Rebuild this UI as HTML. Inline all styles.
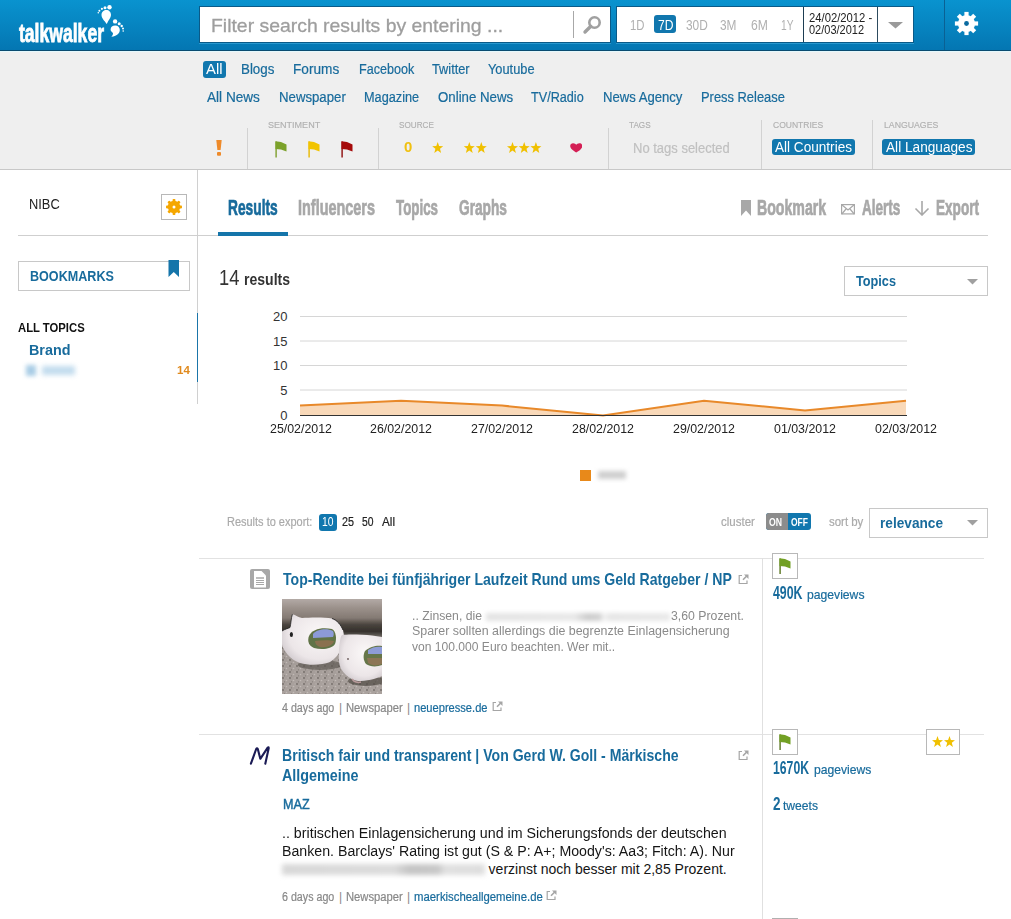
<!DOCTYPE html>
<html><head><meta charset="utf-8">
<style>
html,body{margin:0;padding:0;background:#fff;}
body{width:1011px;height:919px;position:relative;overflow:hidden;font-family:"Liberation Sans",sans-serif;}
.t{position:absolute;white-space:nowrap;line-height:1;transform-origin:0 0;}
.a{position:absolute;}
</style></head><body>
<!-- header -->
<div class="a" style="left:0;top:0;width:1011px;height:50px;background:linear-gradient(#0993cf,#0476b2);"></div>
<div class="a" style="left:0;top:50px;width:1011px;height:1px;background:#0a4b70;"></div>
<!-- filter bar -->
<div class="a" style="left:0;top:51px;width:1011px;height:118px;background:#efefef;"></div>
<div class="a" style="left:0;top:51px;width:1011px;height:1px;background:#e4f8fc;"></div>
<div class="a" style="left:0;top:169px;width:1011px;height:1px;background:#c8c8c8;"></div>
<!-- logo feet -->
<svg class="a" style="left:94px;top:2px" width="34" height="40" viewBox="0 0 34 40">
 <g fill="#fff">
  <path d="M7.5 13C7.5 9.5 10 8 12.3 8C15 8 17 10 17 13C17 16 14.5 18 13 21.5C12.8 21.9 12.3 21.9 12.2 21.5C11 19 7.5 16.5 7.5 13z"/>
  <circle cx="15.5" cy="5.2" r="2.2"/><circle cx="11" cy="5.8" r="1.5"/><circle cx="7.9" cy="6.8" r="1.1"/><circle cx="5.4" cy="8.7" r="1"/><circle cx="4.3" cy="10.8" r="0.8"/>
  <path d="M16.6 27.5C16.6 24.8 18.6 23.4 21.2 23.4C24 23.4 25.8 25.5 25.8 28C25.8 31.5 22.5 34 17.4 34.8C19 33 19.5 31.5 18.5 30.5C17.2 29.5 16.6 28.8 16.6 27.5z"/>
  <circle cx="21.1" cy="19.4" r="2.2"/><circle cx="25.2" cy="21.7" r="1.5"/><circle cx="27.7" cy="24" r="1.2"/><circle cx="29" cy="26.5" r="1"/><circle cx="29.2" cy="29" r="0.8"/>
 </g>
</svg>
<!-- search box -->
<div class="a" style="left:199px;top:6px;width:412px;height:37px;background:#0a5a88;"></div>
<div class="a" style="left:200px;top:7px;width:410px;height:35px;background:#fff;"></div>
<div class="a" style="left:199px;top:43px;width:412px;height:1px;background:#2898cf;"></div>
<div class="a" style="left:573px;top:11px;width:1px;height:27px;background:#a8a8a8;"></div>
<svg class="a" style="left:582px;top:15px" width="21" height="20" viewBox="0 0 21 20">
 <circle cx="12.5" cy="7.5" r="5.2" fill="none" stroke="#a0a0a0" stroke-width="2.6"/>
 <path d="M8.8 11.2L3 17" stroke="#a0a0a0" stroke-width="3.4" stroke-linecap="round"/>
</svg>
<!-- date box -->
<div class="a" style="left:616px;top:6px;width:298px;height:37px;background:#0a5a88;"></div>
<div class="a" style="left:617px;top:7px;width:296px;height:35px;background:#fff;"></div>
<div class="a" style="left:616px;top:43px;width:298px;height:1px;background:#2898cf;"></div>
<div class="a" style="left:654px;top:15px;width:22px;height:18px;background:#1177ae;border-radius:3px;"></div>
<div class="a" style="left:803px;top:7px;width:1px;height:35px;background:#1d3d52;"></div>
<div class="a" style="left:877px;top:7px;width:1px;height:35px;background:#2d4b5e;"></div>
<svg class="a" style="left:888px;top:22px" width="16" height="7"><path d="M0 0H15L7.5 6.5z" fill="#9a9a9a"/></svg>
<div class="a" style="left:944px;top:0;width:1px;height:50px;background:#0a6194;"></div>
<svg class="a" style="left:954px;top:11px" width="25" height="25" viewBox="-12.5 -12.5 25 25">
 <g fill="#fff">
  <circle r="8.6"/>
  <g id="tooth"><rect x="-2.1" y="-11.6" width="4.2" height="5" /></g>
  <use href="#tooth" transform="rotate(45)"/><use href="#tooth" transform="rotate(90)"/><use href="#tooth" transform="rotate(135)"/>
  <use href="#tooth" transform="rotate(180)"/><use href="#tooth" transform="rotate(225)"/><use href="#tooth" transform="rotate(270)"/><use href="#tooth" transform="rotate(315)"/>
 </g>
 <circle r="2.4" fill="#0a6aa0"/>
</svg>

<!-- filter bar badges -->
<div class="a" style="left:203px;top:61px;width:23px;height:17px;background:#1177ae;border-radius:3px;"></div>
<div class="a" style="left:772px;top:139px;width:83px;height:16px;background:#1177ae;border-radius:3px;"></div>
<div class="a" style="left:882px;top:139px;width:93px;height:16px;background:#1177ae;border-radius:3px;"></div>
<!-- separators -->
<div class="a" style="left:247px;top:128px;width:1px;height:41px;background:#d2d2d2;"></div>
<div class="a" style="left:378px;top:128px;width:1px;height:41px;background:#d2d2d2;"></div>
<div class="a" style="left:608px;top:128px;width:1px;height:41px;background:#d2d2d2;"></div>
<div class="a" style="left:761px;top:120px;width:1px;height:49px;background:#d2d2d2;"></div>
<div class="a" style="left:872px;top:120px;width:1px;height:49px;background:#d2d2d2;"></div>
<!-- exclamation -->
<svg class="a" style="left:215px;top:140px" width="8" height="16" viewBox="0 0 8 16">
 <path d="M1.3 0H6.7L5.6 10H2.4z" fill="#ee8a2a"/><rect x="2" y="12" width="4" height="3.8" rx="1" fill="#ee8a2a"/>
</svg>
<!-- flags -->
<svg class="a" style="left:274.5px;top:140.5px" width="14" height="17" viewBox="0 0 14 17">
 <rect x="0.4" y="0.5" width="1.4" height="16" fill="#7e9f2c"/><path d="M0.5 0.3L6 1L11.5 3.6V10.5L6 8.6L0.5 7.9z" fill="#7ba12a"/>
</svg>
<svg class="a" style="left:307.5px;top:140.5px" width="14" height="17" viewBox="0 0 14 17">
 <rect x="0.4" y="0.5" width="1.4" height="16" fill="#e8b800"/><path d="M0.5 0.3L6 1L11.5 3.6V10.5L6 8.6L0.5 7.9z" fill="#f2c400"/>
</svg>
<svg class="a" style="left:340.5px;top:140.5px" width="14" height="17" viewBox="0 0 14 17">
 <rect x="0.4" y="0.5" width="1.4" height="16" fill="#8e0c0c"/><path d="M0.5 0.3L6 1L11.5 3.6V10.5L6 8.6L0.5 7.9z" fill="#a50a0a"/>
</svg>
<!-- source stars -->
<svg class="a" style="left:430px;top:140px" width="115" height="14" viewBox="0 0 115 14">
 <defs><path id="st" d="M5.5 0L6.9 4.1L11 4.2L7.8 6.8L8.9 11L5.5 8.5L2.1 11L3.2 6.8L0 4.2L4.1 4.1z" fill="#f0c000"/></defs>
 <use href="#st" x="2.2" y="2"/>
 <use href="#st" x="33.8" y="2"/><use href="#st" x="45.8" y="2"/>
 <use href="#st" x="77" y="2"/><use href="#st" x="88.7" y="2"/><use href="#st" x="100.4" y="2"/>
</svg>
<svg class="a" style="left:569.5px;top:142.5px" width="12.5" height="10" viewBox="0 0 12.5 10">
 <path d="M6.25 9.6C4 8 0.2 6 0.2 3C0.2 1.2 1.5 0.2 3.1 0.2C4.6 0.2 5.7 1 6.25 1.8C6.8 1 7.9 0.2 9.4 0.2C11 0.2 12.3 1.2 12.3 3C12.3 6 8.5 8 6.25 9.6z" fill="#d41f55"/>
</svg>

<!-- sidebar -->
<div class="a" style="left:197px;top:170px;width:1px;height:234px;background:#d0d0d0;"></div>
<div class="a" style="left:197px;top:313px;width:1px;height:69px;background:#1a75a9;"></div>
<div class="a" style="left:18px;top:235px;width:970px;height:1px;background:#cfcfcf;"></div>
<div class="a" style="left:161px;top:194px;width:24px;height:24px;border:1px solid #b8b8b8;background:#fff;"></div>
<svg class="a" style="left:165px;top:198px" width="18" height="18" viewBox="-9 -9 18 18">
 <g fill="#f5a700">
  <circle r="6.2"/>
  <g id="t2"><rect x="-1.4" y="-8" width="2.8" height="3" rx="0.8"/></g>
  <use href="#t2" transform="rotate(45)"/><use href="#t2" transform="rotate(90)"/><use href="#t2" transform="rotate(135)"/>
  <use href="#t2" transform="rotate(180)"/><use href="#t2" transform="rotate(225)"/><use href="#t2" transform="rotate(270)"/><use href="#t2" transform="rotate(315)"/>
 </g>
 <circle r="1.5" fill="#fff"/>
</svg>
<div class="a" style="left:18px;top:261px;width:170px;height:28px;border:1px solid #c8c8c8;background:#fff;"></div>
<svg class="a" style="left:168px;top:260px" width="12" height="18" viewBox="0 0 12 18"><path d="M0.5 0H11V17L5.75 12L0.5 17z" fill="#1575aa"/></svg>
<div class="a" style="left:26px;top:365px;width:10px;height:11px;background:#a9cde6;filter:blur(2px);"></div><div class="a" style="left:42px;top:366px;width:33px;height:9px;background:#c2dcee;filter:blur(2.5px);"></div>

<!-- tabs -->
<div class="a" style="left:218px;top:232px;width:70px;height:4px;background:#1575aa;"></div>
<svg class="a" style="left:741px;top:200px" width="10" height="16" viewBox="0 0 10 16"><path d="M0 0H10V16L5 10.5L0 16z" fill="#a8a8a8"/></svg>
<svg class="a" style="left:841px;top:203.5px" width="14" height="11" viewBox="0 0 14 11"><rect x="0.6" y="0.6" width="12.8" height="9.3" fill="none" stroke="#a8a8a8" stroke-width="1.2"/><path d="M0.8 0.8L7 6L13.2 0.8M0.8 10L5 5M13.2 10L9 5" fill="none" stroke="#a8a8a8" stroke-width="1.2"/></svg>
<svg class="a" style="left:914px;top:201px" width="16" height="15" viewBox="0 0 16 15"><path d="M8 0V14M1.5 7.5L8 14L14.5 7.5" fill="none" stroke="#a8a8a8" stroke-width="1.6"/></svg>

<!-- topics dropdown -->
<div class="a" style="left:844px;top:266px;width:142px;height:28px;border:1px solid #c8c8c8;background:#fff;"></div>
<svg class="a" style="left:967px;top:279px" width="12" height="6"><path d="M0 0H11L5.5 5.5z" fill="#a0a0a0"/></svg>

<!-- chart -->
<svg class="a" style="left:0;top:0" width="1011" height="480">
 <g stroke="#d6d6d6" stroke-width="1">
  <line x1="300" y1="316.5" x2="907" y2="316.5"/>
  <line x1="300" y1="341" x2="907" y2="341"/>
  <line x1="300" y1="365.5" x2="907" y2="365.5"/>
  <line x1="300" y1="390" x2="907" y2="390"/>
 </g>
 <path d="M300 405.6L401 400.7L502 405.6L603 415.4L704 400.7L805 410.5L906 400.7V415.5H300z" fill="#f9d9b9"/>
 <path d="M300 405.6L401 400.7L502 405.6L603 415.4L704 400.7L805 410.5L906 400.7" fill="none" stroke="#e8892a" stroke-width="2"/>
 <line x1="300" y1="415.5" x2="907" y2="415.5" stroke="#333" stroke-width="1"/>
</svg>
<div class="a" style="left:580px;top:470px;width:11px;height:11px;background:#e8891a;"></div>
<div class="a" style="left:598px;top:471px;width:28px;height:8px;background:#cfcfcf;filter:blur(2px);"></div>

<!-- export row -->
<div class="a" style="left:319px;top:514px;width:18px;height:17px;background:#1177ae;border-radius:3px;"></div>
<div class="a" style="left:766px;top:513px;width:45px;height:17px;background:#1177ae;border-radius:3px;overflow:hidden;"><div style="width:21.5px;height:17px;background:#8c8c8c;"></div></div>
<div class="a" style="left:869px;top:508px;width:117px;height:28px;border:1px solid #c8c8c8;background:#fff;"></div>
<svg class="a" style="left:967px;top:520px" width="12" height="6"><path d="M0 0H11L5.5 5.5z" fill="#a0a0a0"/></svg>

<!-- result list -->
<div class="a" style="left:199px;top:558px;width:785px;height:1px;background:#e2e2e2;"></div>
<div class="a" style="left:199px;top:734px;width:785px;height:1px;background:#e2e2e2;"></div>
<div class="a" style="left:762px;top:558px;width:1px;height:361px;background:#e0e0e0;"></div>

<!-- doc icon -->
<svg class="a" style="left:250px;top:569px" width="20" height="20" viewBox="0 0 20 20">
 <rect x="0" y="0" width="20" height="20" rx="2" fill="#a8a8a8"/>
 <path d="M4 2H11.5L16 6.5V18.5H4z" fill="#fff"/>
 <g stroke="#a8a8a8"><line x1="6" y1="9" x2="14" y2="9" stroke-width="1.5"/><line x1="6" y1="11.5" x2="14" y2="11.5" stroke-width="1"/><line x1="6" y1="13.5" x2="14" y2="13.5" stroke-width="1"/><line x1="6" y1="15.5" x2="14" y2="15.5" stroke-width="1"/></g>
</svg>
<svg class="a" style="left:738px;top:574px" width="11" height="11" viewBox="0 0 11 11"><path d="M4 1.5H1.2V9.5H9V6.5" fill="none" stroke="#a5a5a5" stroke-width="1.2"/><path d="M5 5.8L9.5 1.3" stroke="#a5a5a5" stroke-width="1.6"/><path d="M6 0.5H10.5V5z" fill="#a5a5a5"/></svg>

<!-- piggy image -->
<svg class="a" style="left:282px;top:599px" width="100" height="95" viewBox="0 0 100 95">
 <defs>
  <linearGradient id="bg1" x1="0" y1="0" x2="0" y2="1"><stop offset="0" stop-color="#b3aaa6"/><stop offset="0.09" stop-color="#9c928c"/><stop offset="0.2" stop-color="#847a73"/><stop offset="0.27" stop-color="#4a443e"/><stop offset="0.34" stop-color="#35312c"/><stop offset="0.42" stop-color="#857d78"/><stop offset="0.52" stop-color="#a29a96"/><stop offset="1" stop-color="#aaa29e"/></linearGradient>
  <pattern id="grv" width="7" height="6" patternUnits="userSpaceOnUse"><circle cx="1" cy="1" r="0.9" fill="#3e3834"/><circle cx="4.5" cy="3.5" r="0.8" fill="#dcd6d2"/><circle cx="2.5" cy="4.8" r="0.6" fill="#5a5450"/><circle cx="6" cy="0.8" r="0.6" fill="#d0cac6"/></pattern>
  <filter id="soft" filterUnits="userSpaceOnUse" x="0" y="0" width="100" height="95"><feGaussianBlur stdDeviation="0.45"/></filter>
  <radialGradient id="pg" cx="0.6" cy="0.4" r="0.7"><stop offset="0" stop-color="#fbf8f8"/><stop offset="0.7" stop-color="#ece6e8"/><stop offset="1" stop-color="#cdc6ca"/></radialGradient>
 </defs>
 <g filter="url(#soft)">
 <rect width="100" height="95" fill="url(#bg1)"/>
 <rect y="48" width="100" height="47" fill="url(#grv)" opacity="0.5"/>
 <ellipse cx="38" cy="66" rx="22" ry="5" fill="#5e5852" opacity="0.7"/>
 <ellipse cx="84" cy="82" rx="18" ry="5" fill="#4e4842" opacity="0.7"/>
 <path d="M10.4 15.2C14 16 16 18.5 20 19C27 18.5 42 18 50 19.5C55 21 59 26 61 31C62.5 36 62 43 60 48C58 54 53 60 48 63C40 66 28 67 18 64C12 62 6 57 3 52C1 49 0 47 0 45V32C3 30 6 29.5 8 28.5C9 25 9 19 10.4 15.2z" fill="url(#pg)"/>
 <path d="M10.4 15.2C9 19 9 25 8 28.5C6 29.5 3 30 0 32" fill="none" stroke="#222" stroke-width="0.8"/>
 <path d="M50 19.5C55 21 59 26 61 31" fill="none" stroke="#222" stroke-width="0.9"/>
 <path d="M60 36C66 35 80 35.5 90 36.5L100 38V77C94 80 84 82 76 82C71 81 68 79.5 64 76C60 72 57.5 68 57 63C56.5 57 57 47 58 42C58.5 39 59 37 60 36z" fill="url(#pg)"/>
 <path d="M27 37C30 30 40 28 50 30C54 32 55 40 53 45C50 50 40 51 32 49C27 47 25 42 27 37z" fill="#617346"/>
 <path d="M31 35C35 30 45 29 51 32C52 34 52 36 51 38L31 39z" fill="#8c9ad8"/>
 <path d="M33 42C40 41 48 41 52 42C51 46 45 49 38 48C35 47 33 45 33 42z" fill="#8a7050"/>
 <path d="M83 52C88 47 96 46 100 47V66C95 68 88 68 84 65C81 61 81 56 83 52z" fill="#66764a"/>
 <path d="M86 51C90 48 96 47 100 48V55H86z" fill="#8e9cd6"/>
 <path d="M85 59H100V65C95 67 90 67 86 64z" fill="#8c7454"/>
 <ellipse cx="9.4" cy="35.5" rx="1.6" ry="2.5" fill="#222"/>
 <circle cx="66" cy="60" r="0.9" fill="#6a5a5a"/>
 <path d="M70 80C72 83 76 84 79 83" stroke="#b89a9a" stroke-width="1.5" fill="none"/>
 </g>
</svg>
<!-- right col 1 -->
<div class="a" style="left:772px;top:553px;width:24px;height:24px;border:1px solid #b8b8b8;background:#fff;"></div>
<svg class="a" style="left:778.5px;top:557.5px" width="14" height="17" viewBox="0 0 14 17">
 <rect x="0.4" y="0.5" width="1.4" height="15.5" fill="#5a7620"/><path d="M0.5 0.3L6 1L11.5 3.6V10.5L6 8.6L0.5 7.9z" fill="#72a024"/>
</svg>

<!-- result 2 -->
<svg class="a" style="left:249px;top:744px" width="22" height="22" viewBox="0 0 22 22">
 <path d="M1.9 19.7L7.2 5Q8 3.5 8.8 5L11.3 14.8L18.5 3.8Q19.8 2.5 19.7 4.2L16.3 19.7" fill="none" stroke="#1b1b55" stroke-width="2.1" stroke-linecap="round" stroke-linejoin="round"/>
</svg>
<svg class="a" style="left:738px;top:750px" width="11" height="11" viewBox="0 0 11 11"><path d="M4 1.5H1.2V9.5H9V6.5" fill="none" stroke="#a5a5a5" stroke-width="1.2"/><path d="M5 5.8L9.5 1.3" stroke="#a5a5a5" stroke-width="1.6"/><path d="M6 0.5H10.5V5z" fill="#a5a5a5"/></svg>
<div class="a" style="left:486px;top:612.5px;width:184px;height:8.5px;background:linear-gradient(90deg,#e4e4e4 0,#e8e8e8 48%,#cdcdcd 55%,#d2d2d2 62%,#f4f4f4 64%,#e6e6e6 67%,#e9e9e9 100%);filter:blur(2px);"></div>
<div class="a" style="left:282px;top:864px;width:203px;height:11px;background:linear-gradient(90deg,#d8d8d8 0,#dcdcdc 55%,#c4c4c4 63%,#c8c8c8 77%,#e0e0e0 80%,#dedede 100%);filter:blur(2.5px);"></div>
<svg class="a" style="left:491.5px;top:701px" width="11" height="11" viewBox="0 0 11 11"><path d="M4 1.5H1.2V9.5H9V6.5" fill="none" stroke="#a5a5a5" stroke-width="1.2"/><path d="M5 5.8L9.5 1.3" stroke="#a5a5a5" stroke-width="1.6"/><path d="M6 0.5H10.5V5z" fill="#a5a5a5"/></svg>
<svg class="a" style="left:546px;top:890px" width="11" height="11" viewBox="0 0 11 11"><path d="M4 1.5H1.2V9.5H9V6.5" fill="none" stroke="#a5a5a5" stroke-width="1.2"/><path d="M5 5.8L9.5 1.3" stroke="#a5a5a5" stroke-width="1.6"/><path d="M6 0.5H10.5V5z" fill="#a5a5a5"/></svg>

<div class="a" style="left:772px;top:729px;width:24px;height:24px;border:1px solid #b8b8b8;background:#fff;"></div>
<svg class="a" style="left:778.5px;top:733.5px" width="14" height="17" viewBox="0 0 14 17">
 <rect x="0.4" y="0.5" width="1.4" height="15.5" fill="#5a7620"/><path d="M0.5 0.3L6 1L11.5 3.6V10.5L6 8.6L0.5 7.9z" fill="#72a024"/>
</svg>
<div class="a" style="left:926px;top:729px;width:32px;height:24px;border:1px solid #b8b8b8;background:#fff;"></div>
<svg class="a" style="left:931.5px;top:735.5px" width="25" height="13" viewBox="0 0 25 13">
 <use href="#st" x="0"/><use href="#st" x="12"/>
</svg>
<div class="a" style="left:772px;top:918px;width:26px;height:1px;background:#b0b0b0;"></div>

<div class="t" id="t0" style="left:19.00px;top:21.15px;font-size:25.00px;font-weight:700;color:#fff;-webkit-text-stroke:0.80px #fff;transform:scaleX(0.7029);">talkwalker</div>
<div class="t" id="t1" style="left:210.80px;top:15.65px;font-size:19.00px;font-weight:400;color:#9e9e9e;-webkit-text-stroke:0.30px #9e9e9e;transform:scaleX(1.0211);">Filter search results by entering ...</div>
<div class="t" id="t2" style="left:630.20px;top:17.68px;font-size:14.50px;font-weight:400;color:#b0b0b0;transform:scaleX(0.7818);">1D</div>
<div class="t" id="t3" style="left:685.60px;top:17.68px;font-size:14.50px;font-weight:400;color:#b0b0b0;transform:scaleX(0.8193);">30D</div>
<div class="t" id="t4" style="left:720.20px;top:17.68px;font-size:14.50px;font-weight:400;color:#b0b0b0;transform:scaleX(0.8186);">3M</div>
<div class="t" id="t5" style="left:750.50px;top:17.68px;font-size:14.50px;font-weight:400;color:#b0b0b0;transform:scaleX(0.8384);">6M</div>
<div class="t" id="t6" style="left:781.00px;top:17.68px;font-size:14.50px;font-weight:400;color:#b0b0b0;transform:scaleX(0.7042);">1Y</div>
<div class="t" id="t7" style="left:657.50px;top:17.68px;font-size:14.50px;font-weight:400;color:#fff;transform:scaleX(0.8357);">7D</div>
<div class="t" id="t8" style="left:809.00px;top:11.08px;font-size:13.20px;font-weight:400;color:#222;transform:scaleX(0.8533);">24/02/2012 -</div>
<div class="t" id="t9" style="left:809.00px;top:22.78px;font-size:13.20px;font-weight:400;color:#222;transform:scaleX(0.8331);">02/03/2012</div>
<div class="t" id="t10" style="left:241.40px;top:62.87px;font-size:13.80px;font-weight:400;color:#186b9c;-webkit-text-stroke:0.20px #186b9c;transform:scaleX(0.9677);">Blogs</div>
<div class="t" id="t11" style="left:293.40px;top:62.87px;font-size:13.80px;font-weight:400;color:#186b9c;-webkit-text-stroke:0.20px #186b9c;transform:scaleX(0.9879);">Forums</div>
<div class="t" id="t12" style="left:358.60px;top:62.87px;font-size:13.80px;font-weight:400;color:#186b9c;-webkit-text-stroke:0.20px #186b9c;transform:scaleX(0.9110);">Facebook</div>
<div class="t" id="t13" style="left:432.40px;top:62.87px;font-size:13.80px;font-weight:400;color:#186b9c;-webkit-text-stroke:0.20px #186b9c;transform:scaleX(0.9252);">Twitter</div>
<div class="t" id="t14" style="left:488.10px;top:62.87px;font-size:13.80px;font-weight:400;color:#186b9c;-webkit-text-stroke:0.20px #186b9c;transform:scaleX(0.9274);">Youtube</div>
<div class="t" id="t15" style="left:206.00px;top:62.87px;font-size:13.80px;font-weight:400;color:#fff;transform:scaleX(1.0754);">All</div>
<div class="t" id="t16" style="left:206.80px;top:90.87px;font-size:13.80px;font-weight:400;color:#186b9c;-webkit-text-stroke:0.20px #186b9c;transform:scaleX(0.9856);">All News</div>
<div class="t" id="t17" style="left:278.50px;top:90.87px;font-size:13.80px;font-weight:400;color:#186b9c;-webkit-text-stroke:0.20px #186b9c;transform:scaleX(0.9571);">Newspaper</div>
<div class="t" id="t18" style="left:363.60px;top:90.87px;font-size:13.80px;font-weight:400;color:#186b9c;-webkit-text-stroke:0.20px #186b9c;transform:scaleX(0.9210);">Magazine</div>
<div class="t" id="t19" style="left:437.70px;top:90.87px;font-size:13.80px;font-weight:400;color:#186b9c;-webkit-text-stroke:0.20px #186b9c;transform:scaleX(0.9614);">Online News</div>
<div class="t" id="t20" style="left:531.00px;top:90.87px;font-size:13.80px;font-weight:400;color:#186b9c;-webkit-text-stroke:0.20px #186b9c;transform:scaleX(0.9163);">TV/Radio</div>
<div class="t" id="t21" style="left:602.60px;top:90.87px;font-size:13.80px;font-weight:400;color:#186b9c;-webkit-text-stroke:0.20px #186b9c;transform:scaleX(0.9498);">News Agency</div>
<div class="t" id="t22" style="left:700.70px;top:90.87px;font-size:13.80px;font-weight:400;color:#186b9c;-webkit-text-stroke:0.20px #186b9c;transform:scaleX(0.9350);">Press Release</div>
<div class="t" id="t23" style="left:268.30px;top:121.35px;font-size:9.00px;font-weight:400;color:#b0b0b0;-webkit-text-stroke:0.15px #b0b0b0;transform:scaleX(1.0035);">SENTIMENT</div>
<div class="t" id="t24" style="left:398.50px;top:121.35px;font-size:9.00px;font-weight:400;color:#b0b0b0;-webkit-text-stroke:0.15px #b0b0b0;transform:scaleX(0.9061);">SOURCE</div>
<div class="t" id="t25" style="left:629.30px;top:121.35px;font-size:9.00px;font-weight:400;color:#b0b0b0;-webkit-text-stroke:0.15px #b0b0b0;transform:scaleX(0.9101);">TAGS</div>
<div class="t" id="t26" style="left:772.80px;top:121.35px;font-size:9.00px;font-weight:400;color:#b0b0b0;-webkit-text-stroke:0.15px #b0b0b0;transform:scaleX(0.9469);">COUNTRIES</div>
<div class="t" id="t27" style="left:883.70px;top:121.35px;font-size:9.00px;font-weight:400;color:#b0b0b0;-webkit-text-stroke:0.15px #b0b0b0;transform:scaleX(0.9691);">LANGUAGES</div>
<div class="t" id="t28" style="left:403.70px;top:140.40px;font-size:14.00px;font-weight:700;color:#f0c010;transform:scaleX(1.0645);">0</div>
<div class="t" id="t29" style="left:632.50px;top:140.80px;font-size:14.00px;font-weight:400;color:#c0c0c0;-webkit-text-stroke:0.20px #c0c0c0;transform:scaleX(0.9281);">No tags selected</div>
<div class="t" id="t30" style="left:775.00px;top:140.40px;font-size:14.00px;font-weight:400;color:#fff;transform:scaleX(0.9701);">All Countries</div>
<div class="t" id="t31" style="left:885.50px;top:140.40px;font-size:14.00px;font-weight:400;color:#fff;transform:scaleX(0.9746);">All Languages</div>
<div class="t" id="t32" style="left:28.50px;top:197.10px;font-size:14.00px;font-weight:400;color:#222;transform:scaleX(0.9177);">NIBC</div>
<div class="t" id="t33" style="left:29.70px;top:269.10px;font-size:14.00px;font-weight:700;color:#186b9c;transform:scaleX(0.8988);">BOOKMARKS</div>
<div class="t" id="t34" style="left:18.30px;top:320.75px;font-size:13.00px;font-weight:700;color:#111;transform:scaleX(0.8683);">ALL TOPICS</div>
<div class="t" id="t35" style="left:28.70px;top:342.43px;font-size:15.50px;font-weight:700;color:#186b9c;transform:scaleX(0.9264);">Brand</div>
<div class="t" id="t36" style="left:176.60px;top:365.03px;font-size:11.50px;font-weight:700;color:#e08a1e;transform:scaleX(1.0002);">14</div>
<div class="t" id="t37" style="left:227.90px;top:197.47px;font-size:21.80px;font-weight:700;color:#186b9c;-webkit-text-stroke:0.70px #186b9c;transform:scaleX(0.6311);">Results</div>
<div class="t" id="t38" style="left:298.00px;top:197.47px;font-size:21.80px;font-weight:700;color:#a8a8a8;-webkit-text-stroke:0.70px #a8a8a8;transform:scaleX(0.6621);">Influencers</div>
<div class="t" id="t39" style="left:396.00px;top:197.47px;font-size:21.80px;font-weight:700;color:#a8a8a8;-webkit-text-stroke:0.70px #a8a8a8;transform:scaleX(0.6119);">Topics</div>
<div class="t" id="t40" style="left:459.00px;top:197.47px;font-size:21.80px;font-weight:700;color:#a8a8a8;-webkit-text-stroke:0.70px #a8a8a8;transform:scaleX(0.6290);">Graphs</div>
<div class="t" id="t41" style="left:756.80px;top:197.47px;font-size:21.80px;font-weight:700;color:#a8a8a8;-webkit-text-stroke:0.70px #a8a8a8;transform:scaleX(0.6491);">Bookmark</div>
<div class="t" id="t42" style="left:862.00px;top:197.47px;font-size:21.80px;font-weight:700;color:#a8a8a8;-webkit-text-stroke:0.70px #a8a8a8;transform:scaleX(0.6214);">Alerts</div>
<div class="t" id="t43" style="left:935.80px;top:197.47px;font-size:21.80px;font-weight:700;color:#a8a8a8;-webkit-text-stroke:0.70px #a8a8a8;transform:scaleX(0.6229);">Export</div>
<div class="t" id="t44" style="left:219.30px;top:267.10px;font-size:22.00px;font-weight:400;color:#333;transform:scaleX(0.8332);">14</div>
<div class="t" id="t45" style="left:244.00px;top:272.20px;font-size:16.00px;font-weight:700;color:#333;transform:scaleX(0.8767);">results</div>
<div class="t" id="t46" style="left:856.40px;top:272.85px;font-size:15.00px;font-weight:700;color:#186b9c;transform:scaleX(0.8468);">Topics</div>
<div class="t" id="t47" style="top:310.15px;font-size:13.00px;font-weight:400;color:#333;right:723.5px;">20</div>
<div class="t" id="t48" style="top:334.75px;font-size:13.00px;font-weight:400;color:#333;right:723.5px;">15</div>
<div class="t" id="t49" style="top:359.35px;font-size:13.00px;font-weight:400;color:#333;right:723.5px;">10</div>
<div class="t" id="t50" style="top:383.95px;font-size:13.00px;font-weight:400;color:#333;right:723.5px;">5</div>
<div class="t" id="t51" style="top:408.55px;font-size:13.00px;font-weight:400;color:#333;right:723.5px;">0</div>
<div class="t" id="t52" style="left:269.50px;top:421.95px;font-size:13.00px;font-weight:400;color:#222;transform:scaleX(0.9527);">25/02/2012</div>
<div class="t" id="t53" style="left:370.45px;top:421.95px;font-size:13.00px;font-weight:400;color:#222;transform:scaleX(0.9527);">26/02/2012</div>
<div class="t" id="t54" style="left:471.40px;top:421.95px;font-size:13.00px;font-weight:400;color:#222;transform:scaleX(0.9527);">27/02/2012</div>
<div class="t" id="t55" style="left:572.35px;top:421.95px;font-size:13.00px;font-weight:400;color:#222;transform:scaleX(0.9527);">28/02/2012</div>
<div class="t" id="t56" style="left:673.30px;top:421.95px;font-size:13.00px;font-weight:400;color:#222;transform:scaleX(0.9527);">29/02/2012</div>
<div class="t" id="t57" style="left:774.25px;top:421.95px;font-size:13.00px;font-weight:400;color:#222;transform:scaleX(0.9527);">01/03/2012</div>
<div class="t" id="t58" style="left:875.20px;top:421.95px;font-size:13.00px;font-weight:400;color:#222;transform:scaleX(0.9527);">02/03/2012</div>
<div class="t" id="t59" style="left:226.50px;top:515.77px;font-size:12.50px;font-weight:400;color:#aaa;-webkit-text-stroke:0.20px #aaa;transform:scaleX(0.8780);">Results to export:</div>
<div class="t" id="t60" style="left:322.30px;top:515.77px;font-size:12.50px;font-weight:400;color:#fff;transform:scaleX(0.8270);">10</div>
<div class="t" id="t61" style="left:342.00px;top:515.77px;font-size:12.50px;font-weight:400;color:#222;-webkit-text-stroke:0.20px #222;transform:scaleX(0.8629);">25</div>
<div class="t" id="t62" style="left:362.40px;top:515.77px;font-size:12.50px;font-weight:400;color:#222;-webkit-text-stroke:0.20px #222;transform:scaleX(0.8270);">50</div>
<div class="t" id="t63" style="left:382.00px;top:515.77px;font-size:12.50px;font-weight:400;color:#222;-webkit-text-stroke:0.20px #222;transform:scaleX(0.9348);">All</div>
<div class="t" id="t64" style="left:720.70px;top:515.77px;font-size:12.50px;font-weight:400;color:#aaa;-webkit-text-stroke:0.20px #aaa;transform:scaleX(0.9205);">cluster</div>
<div class="t" id="t65" style="left:769.00px;top:516.58px;font-size:10.50px;font-weight:700;color:#fff;transform:scaleX(0.8254);">ON</div>
<div class="t" id="t66" style="left:790.50px;top:516.58px;font-size:10.50px;font-weight:700;color:#fff;transform:scaleX(0.8095);">OFF</div>
<div class="t" id="t67" style="left:829.30px;top:515.77px;font-size:12.50px;font-weight:400;color:#aaa;-webkit-text-stroke:0.20px #aaa;transform:scaleX(0.9143);">sort by</div>
<div class="t" id="t68" style="left:880.00px;top:515.60px;font-size:14.00px;font-weight:700;color:#186b9c;transform:scaleX(0.9751);">relevance</div>
<div class="t" id="t69" style="left:282.50px;top:570.55px;font-size:17.00px;font-weight:700;color:#186b9c;transform:scaleX(0.8283);">Top-Rendite bei fünfjähriger Laufzeit Rund ums Geld Ratgeber / NP</div>
<div class="t" id="t70" style="left:411.80px;top:610.30px;font-size:12.00px;font-weight:400;color:#8a8a8a;transform:scaleX(1.0189);">.. Zinsen, die</div>
<div class="t" id="t71" style="left:671.00px;top:610.30px;font-size:12.00px;font-weight:400;color:#8a8a8a;transform:scaleX(1.0225);">3,60 Prozent.</div>
<div class="t" id="t72" style="left:411.80px;top:625.00px;font-size:12.00px;font-weight:400;color:#8a8a8a;transform:scaleX(1.0353);">Sparer sollten allerdings die begrenzte Einlagensicherung</div>
<div class="t" id="t73" style="left:411.80px;top:640.80px;font-size:12.00px;font-weight:400;color:#8a8a8a;transform:scaleX(1.0064);">von 100.000 Euro beachten. Wer mit..</div>
<div class="t" id="t74" style="left:282.00px;top:702.10px;font-size:12.00px;font-weight:400;color:#888;-webkit-text-stroke:0.20px #888;transform:scaleX(0.8907);">4 days ago</div>
<div class="t" id="t75" style="left:339.00px;top:702.10px;font-size:12.00px;font-weight:400;color:#888;">|</div>
<div class="t" id="t76" style="left:345.50px;top:702.10px;font-size:12.00px;font-weight:400;color:#888;-webkit-text-stroke:0.20px #888;transform:scaleX(0.9357);">Newspaper</div>
<div class="t" id="t77" style="left:406.90px;top:702.10px;font-size:12.00px;font-weight:400;color:#888;">|</div>
<div class="t" id="t78" style="left:414.20px;top:702.10px;font-size:12.00px;font-weight:400;color:#186b9c;-webkit-text-stroke:0.20px #186b9c;transform:scaleX(0.9256);">neuepresse.de</div>
<div class="t" id="t79" style="left:773.00px;top:582.85px;font-size:19.00px;font-weight:700;color:#186b9c;transform:scaleX(0.6495);">490K</div>
<div class="t" id="t80" style="left:806.50px;top:587.95px;font-size:13.00px;font-weight:400;color:#186b9c;-webkit-text-stroke:0.20px #186b9c;transform:scaleX(0.9359);">pageviews</div>
<div class="t" id="t81" style="left:282.40px;top:746.55px;font-size:17.00px;font-weight:700;color:#186b9c;transform:scaleX(0.8286);">Britisch fair und transparent | Von Gerd W. Goll - Märkische</div>
<div class="t" id="t82" style="left:282.40px;top:767.05px;font-size:17.00px;font-weight:700;color:#186b9c;transform:scaleX(0.8445);">Allgemeine</div>
<div class="t" id="t83" style="left:282.60px;top:797.10px;font-size:14.00px;font-weight:400;color:#186b9c;-webkit-text-stroke:0.45px #186b9c;transform:scaleX(0.8998);">MAZ</div>
<div class="t" id="t84" style="left:282.00px;top:826.00px;font-size:14.00px;font-weight:400;color:#151515;transform:scaleX(1.0167);">.. britischen Einlagensicherung und im Sicherungsfonds der deutschen</div>
<div class="t" id="t85" style="left:282.00px;top:843.90px;font-size:14.00px;font-weight:400;color:#151515;transform:scaleX(1.0129);">Banken. Barclays' Rating ist gut (S &amp; P: A+; Moody's: Aa3; Fitch: A). Nur</div>
<div class="t" id="t86" style="left:488.60px;top:861.60px;font-size:14.00px;font-weight:400;color:#151515;transform:scaleX(1.0000);">verzinst noch besser mit 2,85 Prozent.</div>
<div class="t" id="t87" style="left:282.00px;top:890.80px;font-size:12.00px;font-weight:400;color:#888;-webkit-text-stroke:0.20px #888;transform:scaleX(0.8907);">6 days ago</div>
<div class="t" id="t88" style="left:339.00px;top:890.80px;font-size:12.00px;font-weight:400;color:#888;">|</div>
<div class="t" id="t89" style="left:345.50px;top:890.80px;font-size:12.00px;font-weight:400;color:#888;-webkit-text-stroke:0.20px #888;transform:scaleX(0.9357);">Newspaper</div>
<div class="t" id="t90" style="left:406.90px;top:890.80px;font-size:12.00px;font-weight:400;color:#888;">|</div>
<div class="t" id="t91" style="left:414.20px;top:890.80px;font-size:12.00px;font-weight:400;color:#186b9c;-webkit-text-stroke:0.20px #186b9c;transform:scaleX(0.9465);">maerkischeallgemeine.de</div>
<div class="t" id="t92" style="left:773.00px;top:758.25px;font-size:19.00px;font-weight:700;color:#186b9c;transform:scaleX(0.6429);">1670K</div>
<div class="t" id="t93" style="left:813.70px;top:763.35px;font-size:13.00px;font-weight:400;color:#186b9c;-webkit-text-stroke:0.20px #186b9c;transform:scaleX(0.9327);">pageviews</div>
<div class="t" id="t94" style="left:773.00px;top:794.15px;font-size:19.00px;font-weight:700;color:#186b9c;transform:scaleX(0.7090);">2</div>
<div class="t" id="t95" style="left:783.00px;top:799.25px;font-size:13.00px;font-weight:400;color:#186b9c;-webkit-text-stroke:0.20px #186b9c;transform:scaleX(0.9314);">tweets</div>
</body></html>
